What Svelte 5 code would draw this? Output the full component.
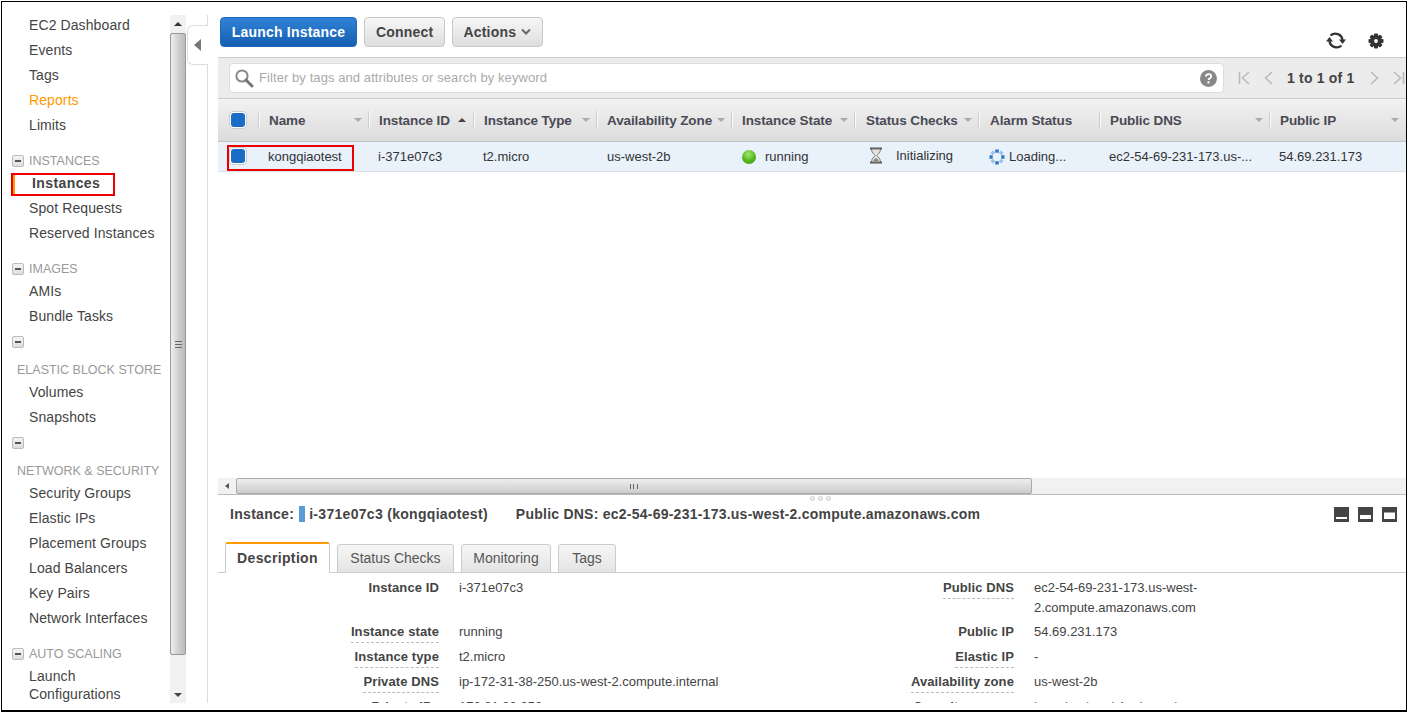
<script>
  const groups = [
    { items: ['EC2 Dashboard', 'Events', 'Tags', 'Reports', 'Limits'] },
    { title: 'INSTANCES', items: ['Instances', 'Spot Requests', 'Reserved Instances'] },
    { title: 'IMAGES', items: ['AMIs', 'Bundle Tasks'] },
    { title: 'ELASTIC BLOCK STORE', wrap: true, items: ['Volumes', 'Snapshots'] },
    { title: 'NETWORK & SECURITY', wrap: true, items: ['Security Groups', 'Elastic IPs', 'Placement Groups', 'Load Balancers', 'Key Pairs', 'Network Interfaces'] },
    { title: 'AUTO SCALING', items: ['Launch Configurations'] }
  ];
  const cols = [
    { name: 'Name', w: 110 },
    { name: 'Instance ID', w: 105, sort: 'up' },
    { name: 'Instance Type', w: 123 },
    { name: 'Availability Zone', w: 135 },
    { name: 'Instance State', w: 123 },
    { name: 'Status Checks', w: 124, wide: true },
    { name: 'Alarm Status', w: 121, none: true, wide: true },
    { name: 'Public DNS', w: 170 },
    { name: 'Public IP', w: 136 }
  ];
  const leftRows = [
    ['Instance ID', 'i-371e07c3', false, 'tall'],
    ['Instance state', 'running', true],
    ['Instance type', 't2.micro', true],
    ['Private DNS', 'ip-172-31-38-250.us-west-2.compute.internal', true],
    ['Private IPs', '172.31.38.250', true]
  ];
  const rightRows = [
    ['Public DNS', 'ec2-54-69-231-173.us-west-2.compute.amazonaws.com', true, 'tall'],
    ['Public IP', '54.69.231.173', false],
    ['Elastic IP', '-', true],
    ['Availability zone', 'us-west-2b', true],
    ['Security groups', 'launch-wizard-1. view rules', true, 'link']
  ];
  const spokes = [0, 45, 90, 135, 180, 225, 270, 315];
</script>

<div class="frame">
  <nav class="side">
    {#each groups as g}
      {#if g.title}
        <div class="ghead" class:wrap={g.wrap}>
          <span class="minus"></span>
          <span class="gtitle">{g.title}</span>
        </div>
      {/if}
      {#each g.items as it}
        <div class="item" class:active={it === 'Instances'} class:reports={it === 'Reports'} class:two={it === 'Launch Configurations'}>{it}</div>
      {/each}
    {/each}
  </nav>

  <div class="vscroll">
    <div class="varrow"><span class="tri-up"></span></div>
    <div class="vthumb"><span class="grip"></span></div>
    <div class="varrow end"><span class="tri-down"></span></div>
  </div>

  <div class="gutter">
    <div class="ctab"><span class="tri-left"></span></div>
  </div>

  <main class="main">
    <div class="toolbar">
      <button class="btn primary">Launch Instance</button>
      <button class="btn">Connect</button>
      <button class="btn actions">Actions
        <svg class="chev" width="10" height="7" viewBox="0 0 10 7"><path d="M1 1.5 5 5.5 9 1.5" fill="none" stroke="#666" stroke-width="2"/></svg>
      </button>
      <div class="tools">
        <svg width="20" height="19" viewBox="0 0 20 19">
          <path d="M4.500 4.500A7.200 7.200 0 0 1 16.500 9" fill="none" stroke="#333" stroke-width="2.300"/>
          <path d="M13 8.500h7l-3.500 4.500z" fill="#333"/>
          <path d="M15.500 14.500A7.200 7.200 0 0 1 3.500 10" fill="none" stroke="#333" stroke-width="2.300"/>
          <path d="M0 10.500h7L3.500 6z" fill="#333"/>
        </svg>
        <svg class="gear" width="16" height="16" viewBox="0 0 16 16">
          <g fill="#333">
            <rect x="6" y="0.500" width="4" height="15" rx="1"/>
            <rect x="6" y="0.500" width="4" height="15" rx="1" transform="rotate(45 8 8)"/>
            <rect x="6" y="0.500" width="4" height="15" rx="1" transform="rotate(90 8 8)"/>
            <rect x="6" y="0.500" width="4" height="15" rx="1" transform="rotate(135 8 8)"/>
            <circle cx="8" cy="8" r="5.800"/>
          </g>
          <circle cx="8" cy="8" r="1.900" fill="#fff"/>
        </svg>
        <svg class="help" width="16" height="16" viewBox="0 0 16 16"><circle cx="8" cy="8" r="6.500" fill="none" stroke="#333" stroke-width="2.400"/></svg>
      </div>
    </div>

    <div class="filter">
      <div class="search">
        <svg width="20" height="20" viewBox="0 0 20 20">
          <circle cx="8" cy="8" r="5.600" fill="none" stroke="#888" stroke-width="2"/>
          <path d="M12 12l6 6" stroke="#777" stroke-width="3" stroke-linecap="round"/>
        </svg>
        <span class="ph">Filter by tags and attributes or search by keyword</span>
        <svg class="q" width="17" height="17" viewBox="0 0 17 17">
          <circle cx="8.500" cy="8.500" r="8.500" fill="#888"/>
          <path d="M6 6.600c0-1.600 1.200-2.500 2.600-2.500s2.600.9 2.600 2.300c0 1.900-2.600 1.900-2.600 3.600" fill="none" stroke="#fff" stroke-width="1.900"/>
          <rect x="7.500" y="11.300" width="2.100" height="2.100" fill="#fff"/>
        </svg>
      </div>
      <div class="pager">
        <svg width="12" height="14" viewBox="0 0 12 14"><path d="M1.500 1v12M11 1 4.500 7 11 13" fill="none" stroke="#bbb" stroke-width="1.600"/></svg>
        <svg class="p2" width="10" height="14" viewBox="0 0 10 14"><path d="M9 1 2.500 7 9 13" fill="none" stroke="#bbb" stroke-width="1.600"/></svg>
        <span class="count">1 to 1 of 1</span>
        <svg class="p3" width="10" height="14" viewBox="0 0 10 14"><path d="M1 1 7.500 7 1 13" fill="none" stroke="#bbb" stroke-width="1.600"/></svg>
        <svg class="p4" width="12" height="14" viewBox="0 0 12 14"><path d="M10.500 1v12M1 1 7.500 7 1 13" fill="none" stroke="#bbb" stroke-width="1.600"/></svg>
      </div>
    </div>

    <div class="thead">
      <div class="cbcell"><span class="cb"><i></i></span></div>
      {#each cols as c}
        <div class="th" style="width:{c.w}px">
          <div class="thin" class:wide={c.wide}>
            <span>{c.name}</span>
            {#if c.sort}<span class="caret up"></span>{:else if !c.none}<span class="caret"></span>{/if}
          </div>
        </div>
      {/each}
    </div>

    <div class="row">
      <div class="cbcell"><span class="cb"><i></i></span></div>
      <div class="td" style="width:111px"><span class="kq">kongqiaotest</span></div>
      <div class="td" style="width:105px">i-371e07c3</div>
      <div class="td" style="width:124px">t2.micro</div>
      <div class="td" style="width:134px">us-west-2b</div>
      <div class="td st" style="width:123px"><span class="ball"></span>running</div>
      <div class="td chk" style="width:125px">
        <svg width="14" height="17" viewBox="0 0 14 17">
          <path d="M1 1.500h12M1 15.500h12" stroke="#555" stroke-width="2"/>
          <path d="M2.500 2c0 4 3 5 3.500 6.500C5.500 10 2.500 11 2.500 15h9c0-4-3-5-3.500-6.500C8.500 7 11.500 6 11.500 2z" fill="#e4e2da" stroke="#777"/>
          <path d="M4 14.500c.6-2 2-3 3-3.500 1 .5 2.400 1.500 3 3.500z" fill="#8a8a84"/>
        </svg>
        <span>Initializing</span>
      </div>
      <div class="td alarm" style="width:120px">
        <svg width="16" height="16" viewBox="0 0 16 16">
          {#each spokes as a, i}
            <rect x="6.200" y="0.500" width="3.600" height="3.200" fill={i % 2 ? '#9cc0e8' : '#2f78c4'} transform="rotate({a} 8 8)"/>
          {/each}
        </svg>
        <span>Loading...</span>
      </div>
      <div class="td" style="width:170px">ec2-54-69-231-173.us-...</div>
      <div class="td">54.69.231.173</div>
      <div class="redbox"></div>
    </div>

    <div class="spacer"></div>

    <div class="hscroll">
      <div class="harrow"><span class="tri-left small"></span></div>
      <div class="hthumb"><span class="hgrip"></span></div>
    </div>

    <div class="split"><i></i><i></i><i></i></div>

    <div class="info">
      <b>Instance:</b><span class="chip"></span><b>i-371e07c3 (kongqiaotest)</b>
      <b class="pub">Public DNS: ec2-54-69-231-173.us-west-2.compute.amazonaws.com</b>
      <div class="views">
        <svg width="15" height="15" viewBox="0 0 15 15"><rect width="15" height="15" fill="#444"/><rect x="2" y="10" width="11" height="2" fill="#fff"/></svg>
        <svg width="15" height="15" viewBox="0 0 15 15"><rect width="15" height="15" fill="#444"/><rect x="2" y="8" width="11" height="4" fill="#fff"/></svg>
        <svg width="15" height="15" viewBox="0 0 15 15"><rect width="15" height="15" fill="#444"/><rect x="2" y="5.500" width="11" height="6.500" fill="#fff"/></svg>
      </div>
    </div>

    <div class="tabs">
      <div class="tab on">Description</div>
      <div class="tab t2">Status Checks</div>
      <div class="tab t3">Monitoring</div>
      <div class="tab t4">Tags</div>
    </div>

    <div class="desc">
      <div class="dl left">
        {#each leftRows as r}
          <div class="dr" class:tall={r[3] === 'tall'}>
            <div class="dt"><span class:dash={r[2]}>{r[0]}</span></div>
            <div class="dd">{r[1]}</div>
          </div>
        {/each}
      </div>
      <div class="dl">
        {#each rightRows as r}
          <div class="dr" class:tall={r[3] === 'tall'}>
            <div class="dt"><span class:dash={r[2]}>{r[0]}</span></div>
            <div class="dd" class:link={r[3] === 'link'}>{r[1]}</div>
          </div>
        {/each}
      </div>
    </div>
  </main>
</div>

<style>
  :global(body) { margin: 0; background: #fff; }
  .frame {
    box-sizing: border-box;
    display: flex;
    width: 1406px;
    height: 711px;
    margin: 1px 0 0 1px;
    padding: 13px 0 7px 0;
    border: 1px solid #000;
    border-bottom-width: 2px;
    background: #fff;
    overflow: hidden;
    font-family: "Liberation Sans", Arial, sans-serif;
    color: #444;
  }
  .side { width: 168px; flex: none; margin-top: -2px; overflow: hidden; font-size: 14px; letter-spacing: 0.1px; }
  .item { height: 25px; line-height: 25px; padding-left: 27px; white-space: nowrap; color: #444; }
  .reports { color: #f90; }
  .two { height: 36px; line-height: 18px; margin-top: 3px; white-space: normal; width: 110px; }
  .active {
    box-sizing: border-box;
    width: 104px;
    height: 23px;
    line-height: 17px;
    margin: 2px 0 0 9px;
    padding-left: 19px;
    border: 2px solid #e00;
    font-weight: bold;
    position: relative;
    letter-spacing: 0.4px;
  }
  .active::before { content: ''; position: absolute; left: 0; top: 0; bottom: 0; width: 2px; background: #f90; }
  .ghead { height: 20px; margin-top: 13px; display: flex; align-items: center; padding-left: 10px; }
  .ghead.wrap { height: 48px; margin-top: 3px; flex-direction: column; align-items: flex-start; justify-content: space-between; }
  .minus {
    box-sizing: border-box; width: 12px; height: 12px; flex: none; border: 1px solid #bbb; border-radius: 2px;
    background: linear-gradient(#f4f4f4, #ddd); display: flex; align-items: center; justify-content: center;
  }
  .minus::after { content: ''; width: 6px; height: 2px; background: #555; }
  .ghead.wrap .minus { margin-top: 4px; }
  .gtitle { margin-left: 5px; font-size: 12.5px; color: #999; line-height: 20px; white-space: nowrap; letter-spacing: 0; }

  .vscroll { width: 16px; flex: none; display: flex; flex-direction: column; background: #f1f1f1; }
  .varrow { height: 18px; display: flex; align-items: center; justify-content: center; flex: none; }
  .varrow.end { flex: 1; align-items: flex-end; padding-bottom: 6px; }
  .vthumb {
    box-sizing: border-box; height: 622px; flex: none; border: 1px solid #999; border-radius: 2px;
    background: linear-gradient(90deg, #eee, #ccc 60%, #bbb);
    display: flex; align-items: center; justify-content: center;
  }
  .grip { width: 7px; height: 5px; border-top: 1px solid #666; border-bottom: 1px solid #666; position: relative; }
  .grip::after { content: ''; position: absolute; left: 0; right: 0; top: 2px; height: 1px; background: #666; }
  .tri-up { border: 4px solid transparent; border-top: 0; border-bottom: 4px solid #333; }
  .tri-down { border: 4px solid transparent; border-bottom: 0; border-top: 4px solid #444; }
  .tri-left { border: 5px solid transparent; border-left: 0; border-right: 7px solid #777; border-top-width: 6px; border-bottom-width: 6px; }
  .tri-left.small { border-width: 3.5px; border-left: 0; border-right: 4px solid #555; }

  .gutter { box-sizing: border-box; width: 22px; flex: none; border-right: 1px solid #ddd; padding: 10px 0 0 1px; }
  .ctab {
    box-sizing: border-box; width: 21px; height: 40px; border: 1px solid #ddd; border-right: 0;
    border-radius: 6px 0 0 6px; background: #fff; display: flex; align-items: center; padding-left: 6px;
  }

  .main { flex: 1; min-width: 0; margin-left: 10px; display: flex; flex-direction: column; overflow: hidden; }
  .toolbar { box-sizing: border-box; height: 42px; flex: none; padding: 2px 0 0 2px; display: flex; gap: 7px; align-items: flex-start; }
  .btn {
    box-sizing: border-box; height: 30px; padding: 0 11px; border: 1px solid #c8c8c8; border-radius: 4px;
    background: linear-gradient(#f6f6f6, #dedede); font: bold 14px "Liberation Sans", Arial, sans-serif; color: #444;
    letter-spacing: 0.2px; white-space: nowrap;
  }
  .btn.actions { padding: 0 11px 0 10px; }
  .btn.primary { width: 137px; padding: 0; border-color: #1c6ab8; background: linear-gradient(#3082d6, #145fb0); color: #fff; }
  .chev { margin-left: 1px; vertical-align: 2px; }
  .tools { margin-left: auto; display: flex; align-items: center; padding-top: 14px; margin-right: -17px; }
  .gear { margin-left: 22px; }
  .help { margin-left: 23px; }

  .filter {
    box-sizing: border-box; height: 42px; flex: none; display: flex; align-items: flex-start; padding: 5px 0 0 11px;
    background: #ececec; border-top: 1px solid #ccc; border-bottom: 1px solid #ccc;
  }
  .search {
    box-sizing: border-box; width: 995px; height: 30px; flex: none; display: flex; align-items: center; padding: 0 6px 0 4px;
    background: #fff; border: 1px solid #ddd; border-radius: 4px;
  }
  .ph { margin: -2px 0 0 5px; font-size: 13px; letter-spacing: 0.08px; color: #aaa; white-space: nowrap; }
  .q { margin-left: auto; }
  .pager { display: flex; align-items: center; height: 30px; margin-left: 14px; }
  .p2 { margin-left: 13px; }
  .count { margin: 0 15px 0 14px; font-size: 14px; font-weight: bold; color: #444; white-space: nowrap; letter-spacing: 0.2px; }
  .p4 { margin-left: 13px; }

  .thead {
    height: 43px; flex: none; box-sizing: border-box; display: flex; align-items: center;
    background: linear-gradient(#f2f2f2, #dcdcdc); border-bottom: 1px solid #c4c4c4;
  }
  .cbcell { width: 39px; flex: none; padding-left: 11px; box-sizing: border-box; display: flex; align-items: center; }
  .thead .cbcell { width: 40px; }
  .cb {
    box-sizing: border-box; width: 18px; height: 18px; border: 1px solid #ccc; border-radius: 4px; background: #fff;
    display: flex; align-items: center; justify-content: center;
  }
  .cb i { width: 14px; height: 14px; border-radius: 3px; background: #1a6cc6; display: block; }
  .th { box-sizing: border-box; flex: none; }
  .thin {
    box-sizing: border-box; height: 18px; display: flex; align-items: center; justify-content: space-between;
    padding: 0 6px 0 10px; border-left: 1px solid #ccc; box-shadow: inset 1px 0 0 #fafafa;
    font-size: 13.5px; font-weight: bold; color: #4a4a55; white-space: nowrap; letter-spacing: -0.1px;
  }
  .thin.wide { padding-left: 11px; }
  .caret { width: 0; height: 0; flex: none; border: 4.5px solid transparent; border-bottom: 0; border-top: 4.5px solid #aaa; }
  .caret.up { border: 4px solid transparent; border-top: 0; border-bottom: 4px solid #444; margin-right: 1px; }

  .row {
    position: relative; box-sizing: border-box; height: 30px; flex: none; display: flex; align-items: center;
    background: #e9f1fb; border-bottom: 1px solid #d8e0e8; font-size: 13px; color: #333; white-space: nowrap;
  }
  .row .cbcell { margin-top: -1px; }
  .td { box-sizing: border-box; flex: none; padding-left: 10px; overflow: hidden; }
  .kq { margin-left: 1px; }
  .st { display: flex; align-items: center; padding-left: 11px; }
  .ball {
    width: 14px; height: 14px; border-radius: 50%; margin-right: 9px; flex: none;
    background: radial-gradient(circle at 45% 30%, #a5e86a, #52b51f 55%, #3a9412);
  }
  .chk { display: flex; align-items: center; padding-left: 15px; margin-top: -3px; }
  .chk span { margin-left: 13px; }
  .alarm { display: flex; align-items: center; }
  .alarm span { margin-left: 4px; }
  .redbox { position: absolute; left: 9px; top: 3px; width: 123px; height: 22px; border: 2px solid #e00; }

  .spacer { height: 306px; flex: none; }
  .hscroll { height: 17px; flex: none; box-sizing: border-box; display: flex; background: #f1f1f1; border-bottom: 1px solid #bbb; }
  .harrow { width: 18px; display: flex; align-items: center; justify-content: center; }
  .hthumb {
    box-sizing: border-box; width: 796px; border: 1px solid #aaa; border-radius: 2px; background: linear-gradient(#eee, #ccc);
    display: flex; align-items: center; justify-content: center;
  }
  .hgrip { width: 6px; height: 5px; border-left: 1px solid #666; border-right: 1px solid #666; position: relative; }
  .hgrip::after { content: ''; position: absolute; top: 0; bottom: 0; left: 2px; width: 1px; background: #666; }
  .split { height: 7px; flex: none; display: flex; justify-content: center; gap: 3px; padding: 1px 0 0 17px; box-sizing: border-box; }
  .split i { box-sizing: border-box; width: 5px; height: 5px; border-radius: 50%; background: #eee; border: 1px solid #ccc; display: block; }
  .info { height: 23px; flex: none; display: flex; align-items: center; padding: 0 9px 0 12px; font-size: 14px; color: #444; white-space: nowrap; letter-spacing: 0.3px; }
  .chip { width: 6px; height: 16px; margin: 0 4px 0 5px; background: #5b9bd5; flex: none; }
  .pub { margin-left: 28px; letter-spacing: 0.24px; }
  .views { margin: 2px 0 0 auto; display: flex; gap: 9px; }
  .tabs { height: 30px; margin-top: 18px; flex: none; box-sizing: border-box; display: flex; gap: 7px; align-items: flex-end; padding-left: 7px; border-bottom: 1px solid #ccc; }
  .tab {
    box-sizing: border-box; height: 29px; margin-bottom: -1px; text-align: center; line-height: 27px; font-size: 14px; color: #555;
    border: 1px solid #ccc; border-radius: 3px 3px 0 0; background: linear-gradient(#f6f6f6, #e4e4e4); white-space: nowrap;
  }
  .t2 { width: 117px; }
  .t3 { width: 90px; }
  .t4 { width: 58px; }
  .tab.on { width: 105px; height: 31px; font-weight: bold; letter-spacing: 0.35px; color: #444; background: #fff; border-top: 2px solid #f90; border-bottom: 0; line-height: 29px; }
  .desc { flex: 1; min-height: 0; overflow: hidden; display: flex; padding-top: 5px; font-size: 13px; }
  .dl { flex: none; }
  .dl.left { width: 575px; }
  .dr { display: flex; height: 25px; line-height: 20px; }
  .dr.tall { height: 44px; }
  .dt { width: 221px; flex: none; text-align: right; font-weight: bold; color: #444; letter-spacing: 0.1px; }
  .dash { display: inline-block; border-bottom: 1px dashed #bbb; line-height: 20px; }
  .dd { width: 175px; margin-left: 20px; color: #444; flex: none; }
  .left .dd { width: 320px; }
  .dd.link { color: #2a6fb8; }
</style>
